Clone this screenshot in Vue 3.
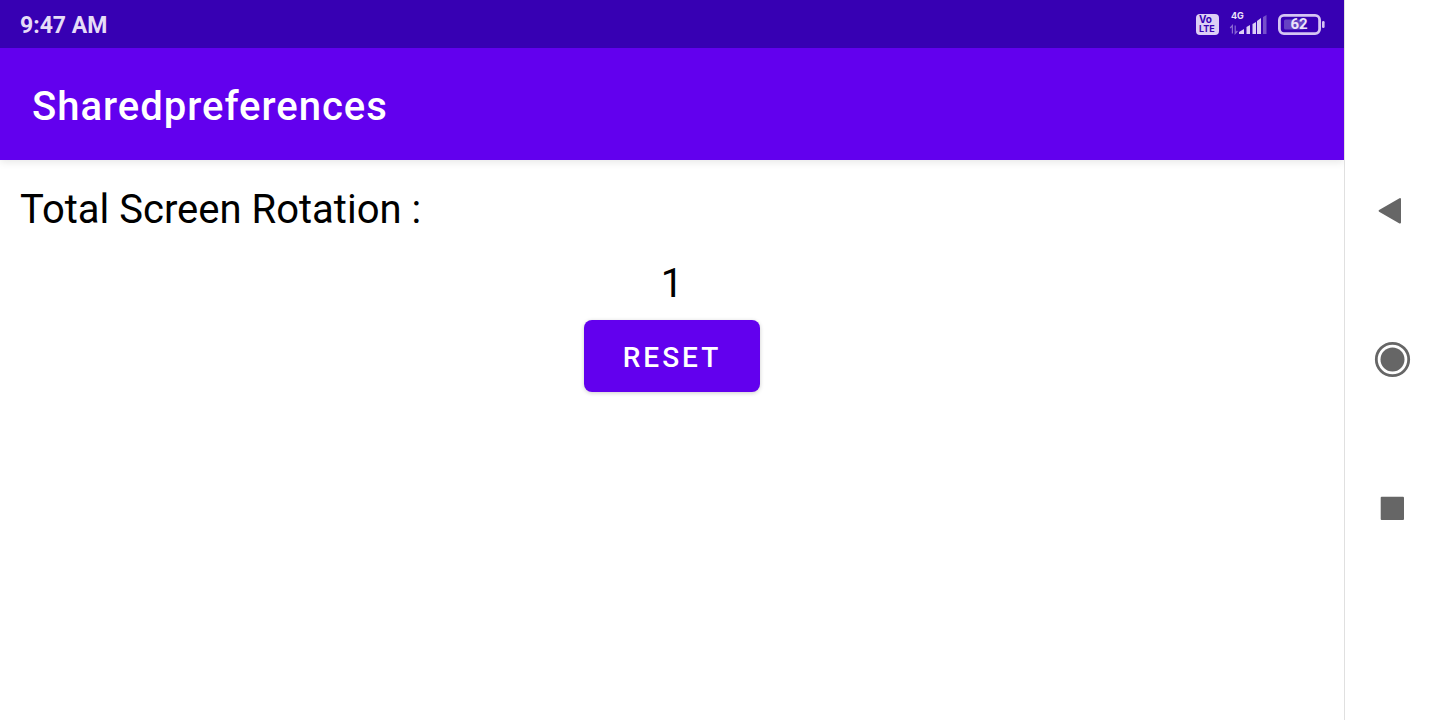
<script setup>
import { ref } from 'vue'

const rotations = ref(1)
const battery = 62
</script>

<template>
  <div class="device">
    <div class="app">
      <header>
        <div class="status-bar">
          <time class="clock">9:47 AM</time>
          <div class="indicators">
            <svg class="volte" width="24" height="32" viewBox="0 0 24 32" role="img" aria-label="VoLTE">
              <rect x="0" y="6" width="23" height="21" rx="4" fill="#dccff5" />
              <text x="3" y="15" font-size="10">Vo</text>
              <text x="3" y="24" font-size="9">LTE</text>
            </svg>
            <svg class="signal" width="40" height="32" viewBox="0 0 40 32" role="img" aria-label="Mobile signal">
              <text x="2" y="11" font-size="9">4G</text>
              <g fill="none" stroke="#8a68d3" stroke-width="1.2">
                <path d="M3.4 25.5V17.5L1.2 20" />
                <path d="M6.2 17.5V25.5L8.4 23" />
              </g>
              <g fill="#dccff5">
                <path d="M10 26v-2l5-3v5z" />
                <path d="M17.5 26v-7l3.5-2v9z" />
                <path d="M23.5 26v-10l3.5-2v12z" />
                <path d="M28 26V13l4-3v16z" />
              </g>
              <path d="M34 26V9l3.5-2v19z" fill="#7650cb" />
            </svg>
            <svg class="battery" width="48" height="24" viewBox="0 0 48 24" role="img" aria-label="Battery level">
              <rect x="1.4" y="3.4" width="40.2" height="18.2" rx="4.5" fill="none" stroke="#d5c5f3" stroke-width="2.8" />
              <rect x="6" y="7.5" width="20" height="10" rx="1.5" fill="#6642c3" />
              <rect x="44" y="9" width="2.6" height="7" rx="1.2" fill="#d5c5f3" />
              <text x="21" y="17" font-size="15" text-anchor="middle">{{ battery }}</text>
            </svg>
          </div>
        </div>
        <div class="toolbar"><h1>Sharedpreferences</h1></div>
      </header>
      <main>
        <p class="label">Total Screen Rotation :</p>
        <output class="count">{{ rotations }}</output>
        <button class="reset" type="button" @click="rotations = 0">RESET</button>
      </main>
    </div>
    <nav aria-label="System navigation">
      <button type="button" aria-label="Back">
        <svg width="40" height="40" viewBox="0 0 40 40"><path d="M7.6 19.8 28 8V31.6Z" fill="#666" stroke="#666" stroke-width="2" stroke-linejoin="round" /></svg>
      </button>
      <button type="button" aria-label="Home">
        <svg width="40" height="40" viewBox="0 0 40 40"><circle cx="20.5" cy="19.5" r="16.2" fill="none" stroke="#666" stroke-width="2.8" /><circle cx="20.5" cy="19.5" r="12" fill="#666" /></svg>
      </button>
      <button type="button" aria-label="Recent apps">
        <svg width="40" height="40" viewBox="0 0 40 40"><rect x="8.7" y="7.8" width="23.3" height="23.2" rx="1" fill="#666" /></svg>
      </button>
    </nav>
  </div>
</template>

<style>
body {
  background: #fff;
}
</style>

<style scoped>
.device {
  display: flex;
  min-height: 100vh;
  font-family: Roboto, "Liberation Sans", sans-serif;
  color: #000;
}

.app {
  flex: 1;
  min-width: 0;
}

header {
  color: #fff;
  box-shadow: 0 2px 8px rgba(0, 0, 0, 0.1);
  clip-path: inset(0 0 -16px 0);
}

.status-bar {
  display: flex;
  align-items: center;
  justify-content: space-between;
  height: 48px;
  padding: 0 18px 0 20px;
  background: #3700b3;
}

.clock {
  padding-top: 2px;
  font-size: 23px;
  font-weight: 700;
  color: #e6dcf7;
}

.indicators {
  display: flex;
  align-items: center;
  gap: 9px;
}

.indicators text {
  font-weight: 700;
  fill: #ece4fa;
}

.indicators .volte text,
.indicators .signal text {
  font-family: Inter, sans-serif;
}

.indicators .volte text {
  fill: #3700b3;
}

.toolbar {
  display: flex;
  align-items: center;
  min-height: 112px;
  padding: 4px 32px 0;
  box-sizing: border-box;
  background: #6200ee;
}

h1 {
  margin: 0;
  font-size: 40px;
  font-weight: 500;
  letter-spacing: 1px;
}

main {
  display: flex;
  flex-direction: column;
  align-items: center;
  padding: 20px;
}

.label,
.count {
  margin: 0;
  font-size: 40px;
  line-height: 60px;
}

.label {
  align-self: stretch;
}

.count {
  margin-top: 14px;
}

.reset {
  min-width: 176px;
  height: 72px;
  margin-top: 6px;
  padding: 2px 32px 0;
  border: 0;
  border-radius: 8px;
  background: #6200ee;
  box-shadow: 0 1px 4px rgba(0, 0, 0, 0.2);
  color: #fff;
  font: 500 28px Roboto, "Liberation Sans", sans-serif;
  letter-spacing: 3px;
}

nav {
  display: flex;
  flex-direction: column;
  align-items: center;
  justify-content: center;
  gap: 101px;
  width: 94px;
  padding-right: 1px;
  border-left: 1px solid #e0e0e0;
}

nav button {
  display: grid;
  place-items: center;
  width: 48px;
  height: 48px;
  padding: 0;
  border: 0;
  background: none;
}
</style>
